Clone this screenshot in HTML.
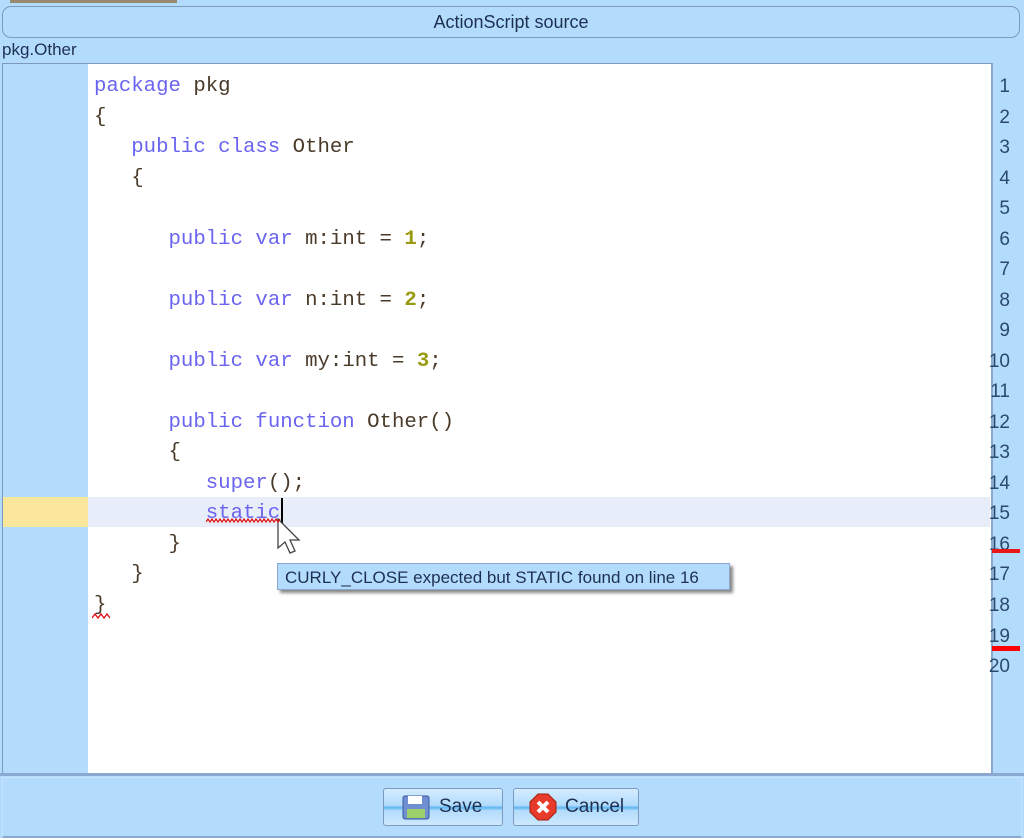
<!DOCTYPE html>
<html><head><style>
body{margin:0;width:1024px;height:837px;background:#b3dcfc;position:relative;overflow:hidden;font-family:"Liberation Sans",sans-serif}
.abs{position:absolute}
#code div{position:absolute;left:94px;height:30px;line-height:30px;white-space:pre;font-family:"Liberation Mono",monospace;font-size:20.7px;color:#4a3a2a}
#gut div{position:absolute;right:14px;width:60px;text-align:right;line-height:30px;font-size:19px;color:#2a4a6a}
.k{color:#6a64f0}.n{color:#9a9a10;font-weight:bold}
.btn{position:absolute;top:788px;height:36px;border:1px solid #7d99c0;border-radius:3px;background:linear-gradient(#d4ecfe,#b3dcfc 45%,#5fb4f2 52%,#b3dcfc 60%,#cde8fd);font-size:19px;color:#1e3050;line-height:36px}
</style></head><body>
<div class="abs" style="left:10px;top:0;width:167px;height:3px;background:#9a8a70"></div>
<div class="abs" style="left:2px;top:6px;width:1016px;height:30px;border:1px solid #7d99c0;border-radius:9px;background:#b3dcfc;text-align:center;line-height:31px;font-size:18px;color:#1e3050">ActionScript source</div>
<div class="abs" style="left:2px;top:39px;font-size:17px;line-height:22px;color:#1e3050">pkg.Other</div>
<div class="abs" style="left:2px;top:63px;width:988px;height:710px;border:1px solid #7d99c0;border-right:2px solid #8aa8d0;background:#fff"></div>
<div class="abs" style="left:3px;top:64px;width:85px;height:709px;background:#b3dcfc"></div>
<div class="abs" style="left:3px;top:497px;width:85px;height:30px;background:#fae79c"></div>
<div class="abs" style="left:88px;top:497px;width:902px;height:30px;background:#e8eef9"></div>
<div id="gut"></div>
<div id="code"></div>
<div class="abs" style="left:281px;top:498px;width:2px;height:25px;background:#000"></div>
<svg class="abs" style="left:276px;top:518px" width="28" height="38"><path d="M2 1 L2 30 L9 24 L14 35 L19 33 L14 22 L23 22 Z" fill="#fff" stroke="#444" stroke-width="1.3"/></svg>
<svg class="abs" style="left:206px;top:518px" width="76" height="6"><path d="M0 4 l2-3 2 3 2-3 2 3 2-3 2 3 2-3 2 3 2-3 2 3 2-3 2 3 2-3 2 3 2-3 2 3 2-3 2 3 2-3 2 3 2-3 2 3 2-3 2 3 2-3 2 3 2-3 2 3 2-3 2 3 2-3 2 3 2-3 2 3 2-3 2 3 2-3" fill="none" stroke="#e01010" stroke-width="1.2"/></svg>
<svg class="abs" style="left:92px;top:612px" width="18" height="8"><path d="M0 6 l3-4 3 4 3-4 3 4 3-4 3 4" fill="none" stroke="#e01010" stroke-width="1.3"/></svg>
<div class="abs" style="left:277px;top:563px;width:453px;height:27px;border:1px solid #8aa8d0;background:#b3dcfc;box-shadow:3px 3px 3px #888;font-size:17px;line-height:27px;padding-left:7px;box-sizing:border-box;color:#1e3050">CURLY_CLOSE expected but STATIC found on line 16</div>
<div class="abs" style="left:992px;top:549px;width:28px;height:4px;background:#e81818"></div>
<div class="abs" style="left:992px;top:646px;width:28px;height:5px;background:#f00"></div>
<div class="abs" style="left:0;top:773px;width:1024px;height:3px;background:#8aa8d0"></div>
<div class="abs" style="left:2px;top:777px;width:1018px;height:58px;border:1px solid #c8e4fc;border-bottom:2px solid #8aa8d0"></div>
<div class="btn" style="left:383px;width:118px">
<svg class="abs" style="left:18px;top:6px" width="28" height="25"><rect x="1" y="1" width="26" height="23" rx="2" fill="#6f8fd0" stroke="#3a5aa0"/><rect x="6" y="1" width="14" height="8" fill="#fff"/><rect x="5" y="14" width="18" height="9" fill="#9dd06a"/></svg>
<span style="position:absolute;left:55px">Save</span></div>
<div class="btn" style="left:513px;width:124px">
<svg class="abs" style="left:15px;top:4px" width="28" height="28"><path d="M9 1h10l8 8v10l-8 8H9l-8-8V9z" fill="#e83a2a" stroke="#a02010"/><path d="M9 9l10 10M19 9L9 19" stroke="#fff" stroke-width="4"/></svg>
<span style="position:absolute;left:51px">Cancel</span></div>
<script>
var L=['<span class="k">package</span> pkg','{','   <span class="k">public class</span> Other','   {','','      <span class="k">public var</span> m:int = <span class="n">1</span>;','','      <span class="k">public var</span> n:int = <span class="n">2</span>;','','      <span class="k">public var</span> my:int = <span class="n">3</span>;','','      <span class="k">public function</span> Other()','      {','         <span class="k">super</span>();','         <span class="k">static</span>','      }','   }','}','',''];
var c='',g='';
for(var i=0;i<20;i++){var t=72+i*30.53;c+='<div style="top:'+t+'px">'+L[i]+'</div>';g+='<div style="top:'+t+'px">'+(i+1)+'</div>';}
document.getElementById('code').innerHTML=c;document.getElementById('gut').innerHTML=g;
</script>
</body></html>
